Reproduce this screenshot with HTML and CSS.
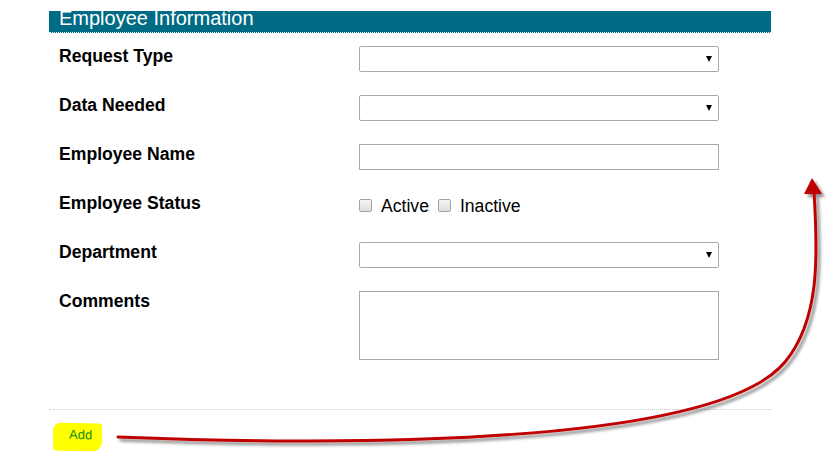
FILE: index.html
```html
<!DOCTYPE html>
<html lang="en">
<head>
    <meta charset="UTF-8">
    <meta name="viewport" content="width=device-width, initial-scale=1.0">
    <title>Employee Information</title>
    <link rel="stylesheet" href="styles.css">
</head>
<body>
    <div class="page">
        <div class="panel-head">Employee Information</div>

        <div class="form">
            <div class="row">
                <label class="field-label">Request Type</label>
                <div class="select-wrap">
                    <select class="field-select"></select>
                </div>
            </div>
            <div class="row">
                <label class="field-label">Data Needed</label>
                <div class="select-wrap">
                    <select class="field-select"></select>
                </div>
            </div>
            <div class="row">
                <label class="field-label">Employee Name</label>
                <input type="text" class="field-text">
            </div>
            <div class="row">
                <label class="field-label">Employee Status</label>
                <div class="checks">
                    <input type="checkbox" class="check" id="status-active">
                    <label for="status-active" class="check-label">Active</label>
                    <input type="checkbox" class="check" id="status-inactive">
                    <label for="status-inactive" class="check-label">Inactive</label>
                </div>
            </div>
            <div class="row">
                <label class="field-label">Department</label>
                <div class="select-wrap">
                    <select class="field-select"></select>
                </div>
            </div>
            <div class="row">
                <label class="field-label">Comments</label>
                <textarea class="field-area"></textarea>
            </div>
        </div>

        <div class="actions">
            <a href="#" class="add-link">Add</a>
        </div>
    </div>

    <!-- annotation drawn over the page -->
    <svg class="annotation" width="833" height="463" viewBox="0 0 833 463">
        <defs>
            <filter id="arrow-shadow" x="-10%" y="-10%" width="130%" height="130%">
                <feDropShadow dx="3" dy="3" stdDeviation="1.8" flood-color="#000" flood-opacity="0.45"/>
            </filter>
        </defs>
        <g filter="url(#arrow-shadow)">
            <path d="M118,437 C400,448 720,440 785,362 C820,320 818,255 814,192" fill="none" stroke="#c00000" stroke-width="3" stroke-linecap="round"/>
            <polygon points="812,178 804,194 822,194" fill="#c00000"/>
        </g>
    </svg>
</body>
</html>
```

FILE: styles.css
```css
body {
    margin: 0;
    font-family: "Liberation Sans", Arial, sans-serif;
    color: #000;
    background-color: #fff;
    position: relative;
    width: 833px;
    height: 463px;
    overflow: hidden;
}
.page {
    width: 722px;
    margin-left: 49px;
    padding-top: 11px;
}
.panel-head {
    background-color: #006b84;
    color: #fff;
    font-size: 20px;
    line-height: 14px;
    height: 14px;
    padding: 0 10px 7px 10px;
    border-bottom: 1px dotted #e8f0f2;
}
.form {
    display: flex;
    flex-direction: column;
    gap: 23px;
    padding: 13px 0 49px 0;
}
.row {
    display: grid;
    grid-template-columns: 310px 360px;
    align-items: start;
}
.field-label {
    padding-left: 10px;
    font-size: 17.6px;
    font-weight: bold;
    line-height: 20px;
}
.select-wrap {
    position: relative;
}
.select-wrap::after {
    content: "";
    position: absolute;
    right: 7px;
    top: 10px;
    border-left: 3px solid transparent;
    border-right: 3px solid transparent;
    border-top: 6px solid #000;
}
.field-select,
.field-text,
.field-area {
    display: block;
    box-sizing: border-box;
    width: 360px;
    margin: 0;
    border: 1px solid #a9a9a9;
    background-color: #fff;
    font-family: inherit;
    font-size: 14px;
}
.field-select {
    appearance: none;
    -webkit-appearance: none;
    height: 26px;
    border-radius: 2px;
}
.field-text {
    height: 26px;
}
.field-area {
    height: 69px;
    resize: none;
}
.checks {
    display: flex;
    align-items: center;
    height: 26px;
    font-size: 17.6px;
    line-height: 20px;
}
.check {
    appearance: none;
    -webkit-appearance: none;
    box-sizing: border-box;
    width: 13px;
    height: 13px;
    margin: 0 0 1px 0;
    border: 1px solid #a3a3a3;
    border-radius: 2px;
    background: linear-gradient(#f6f6f6, #dedede);
}
.check-label {
    margin: 0 9px 0 9px;
}
.actions {
    border-top: 1px dotted #c8c8c8;
    padding-top: 13px;
}
.add-link {
    display: inline-block;
    margin-left: 4px;
    width: 49px;
    height: 28px;
    box-sizing: border-box;
    padding: 4px 0 0 16px;
    background-color: #ffff00;
    border-radius: 8px 3px 10px 4px;
    color: #158a15;
    font-size: 13px;
    line-height: 16px;
    text-decoration: none;
    transform: skewY(1deg);
}
.annotation {
    position: absolute;
    top: 0;
    left: 0;
    pointer-events: none;
}
```
